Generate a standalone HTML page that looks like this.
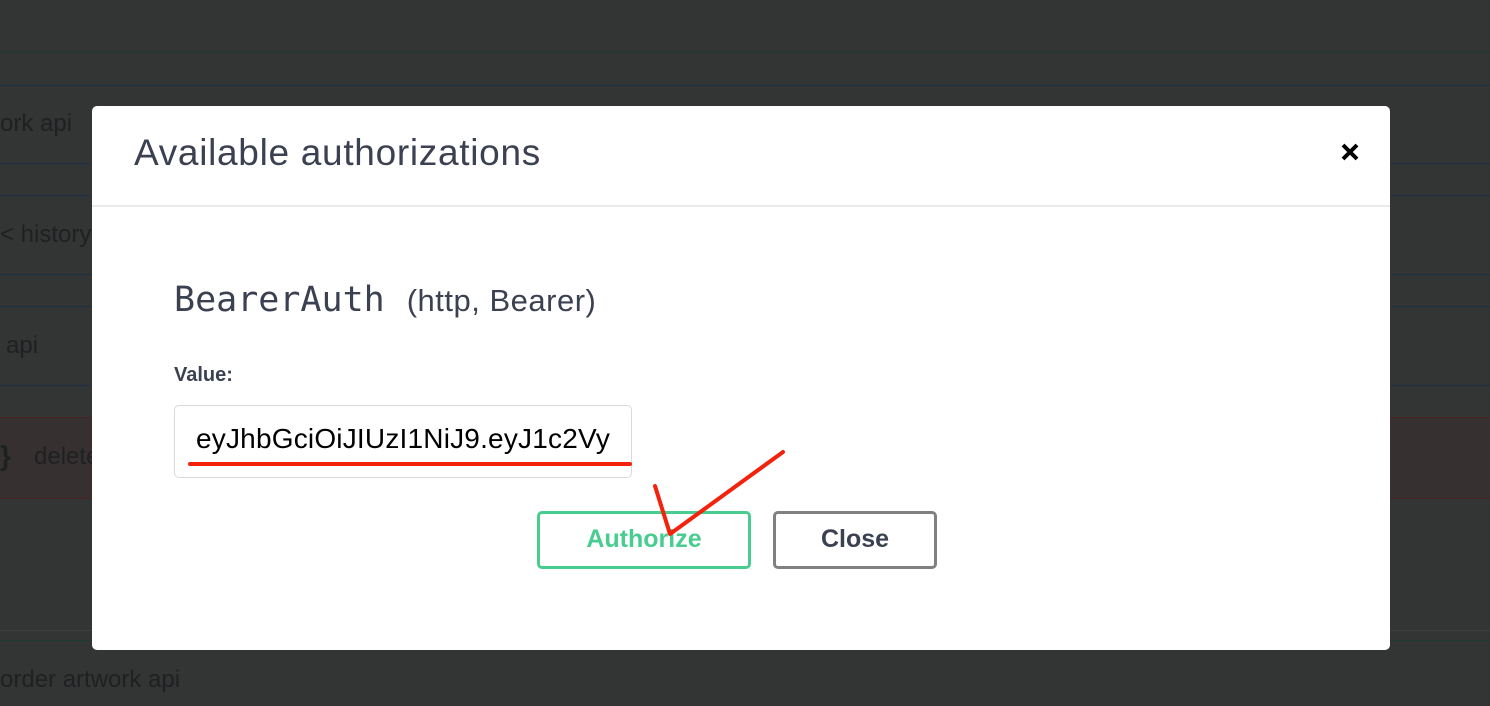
<!DOCTYPE html>
<html><head><style>
body{margin:0;width:1490px;height:706px;background:#333434;position:relative;overflow:hidden;font-family:"Liberation Sans",sans-serif}
.l{position:absolute;left:0;width:1490px;height:1px}
.bg{position:absolute;left:0;width:1490px}
.t{position:absolute;color:#1f2022;font-size:24px}
.modal{position:absolute;left:92px;top:106px;width:1298px;height:544px;background:#fff;border-radius:5px}
</style></head><body>
<div class="l" style="top:52px;background:#1f3a30"></div>
<div class="l" style="top:85px;background:#1e3048"></div>
<div class="l" style="top:163px;background:#1e3048"></div>
<div class="l" style="top:195px;background:#1e3048"></div>
<div class="l" style="top:274px;background:#1e3048"></div>
<div class="l" style="top:306px;background:#1e3048"></div>
<div class="l" style="top:385px;background:#1e3048"></div>
<div class="bg" style="top:417px;height:80px;background:#363130;border-top:1px solid #4a2224;border-bottom:1px solid #4a2224"></div>
<div class="l" style="top:630px;background:#3e3e3e"></div>
<div class="l" style="top:640px;background:#1f3a30"></div>
<div class="t" style="left:0;top:110px">ork api</div>
<div class="t" style="left:0;top:221px">&lt; history</div>
<div class="t" style="left:6px;top:332px">api</div>
<div class="t" style="left:0;top:440px;font-weight:bold;font-size:28px">}</div>
<div class="t" style="left:34px;top:443px">delete</div>
<div class="t" style="left:0;top:666px">order artwork api</div>
<div class="modal">
<div style="position:absolute;left:42px;top:26px;font-size:37px;color:#3b4151;letter-spacing:0.7px">Available authorizations</div>
<svg style="position:absolute;left:1248px;top:36px" width="20" height="20"><path d="M3 3L17 17M17 3L3 17" stroke="#000" stroke-width="4"/></svg>
<div style="position:absolute;left:0;top:99px;width:1298px;height:2px;background:#ebebeb"></div>
<div style="position:absolute;left:82px;top:174px;color:#3b4151;white-space:nowrap"><span style="font-family:'DejaVu Sans Mono','Liberation Mono',monospace;font-size:35px">BearerAuth</span><span style="font-size:31px;letter-spacing:0.5px;margin-left:22px">(http, Bearer)</span></div>
<div style="position:absolute;left:82px;top:258px;font-size:20px;font-weight:bold;color:#3b4151">Value:</div>
<div style="position:absolute;left:82px;top:299px;width:456px;height:71px;border:1px solid #d9d9d9;border-radius:5px"></div>
<div style="position:absolute;left:104px;top:317px;font-size:28px;color:#000;letter-spacing:0.2px">eyJhbGciOiJIUzI1NiJ9.eyJ1c2Vy</div>
<div style="position:absolute;left:96px;top:356px;width:444px;height:4px;background:#f3220c;border-radius:2px"></div>
<div style="position:absolute;left:445px;top:405px;width:208px;height:52px;border:3px solid #49cc90;border-radius:5px;color:#49cc90;font-weight:bold;font-size:25px;text-align:center;line-height:50px">Authorize</div>
<div style="position:absolute;left:681px;top:405px;width:158px;height:52px;border:3px solid #808080;border-radius:5px;color:#3b4151;font-weight:bold;font-size:25px;text-align:center;line-height:50px">Close</div>
<svg style="position:absolute;left:0;top:0" width="1298" height="544"><path d="M563 380L578 428L691 346" fill="none" stroke="#f3220c" stroke-width="4" stroke-linecap="round" stroke-linejoin="round"/></svg>
</div>
</body></html>
